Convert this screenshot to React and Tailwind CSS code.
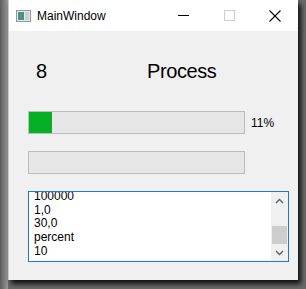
export default function App() {
  const font = { fontFamily: '"Liberation Sans", Arial, sans-serif' };
  return (
    <div className="w-[306px] h-[289px] bg-[#6a6a6a] overflow-hidden relative" style={font}>
      <div className="absolute left-0 top-0 w-[8px] h-full bg-gradient-to-r from-[#5c5c5c] to-[#9a9a9a]" />
      <div className="absolute ml-[8px] w-[290px] h-[280px] flex flex-col shadow-[3px_4px_5px_rgba(0,0,0,0.85)] border-l border-[#c8c8c8]">
        {/* title bar */}
        <div className="h-[31px] bg-white flex items-center">
          <div className="pl-[7px] flex items-center">
            <svg width="15" height="12" viewBox="0 0 15 12">
              <rect x="0.5" y="0.5" width="14" height="11" fill="#e4eaec" stroke="#8a9aa0" />
              <rect x="2" y="2" width="6" height="8" fill="#4f8f8a" />
              <rect x="9" y="2" width="4" height="8" fill="#c6d3d6" />
            </svg>
            <span className="ml-[6px] text-[12px] text-black leading-[14px]">MainWindow</span>
          </div>
          <div className="ml-auto flex h-full">
            <div className="w-[46px] h-full flex items-center justify-center">
              <svg width="11" height="11" viewBox="0 0 11 11">
                <line x1="0" y1="5.5" x2="11" y2="5.5" stroke="#000" strokeWidth="1" />
              </svg>
            </div>
            <div className="w-[46px] h-full flex items-center justify-center">
              <svg width="11" height="11" viewBox="0 0 11 11">
                <rect x="0.5" y="0.5" width="10" height="10" fill="none" stroke="#cccccc" strokeWidth="1" />
              </svg>
            </div>
            <div className="w-[46px] h-full flex items-center justify-center">
              <svg width="12" height="12" viewBox="0 0 12 12">
                <path d="M0.5 0.5 L11.5 11.5 M11.5 0.5 L0.5 11.5" stroke="#000" strokeWidth="1.1" fill="none" />
              </svg>
            </div>
          </div>
        </div>
        {/* client */}
        <div className="flex-1 bg-[#f0f0f0] flex flex-col pl-[19px]">
          <div className="mt-[28px] h-[24px] flex items-center pl-[8px] text-[20px] leading-[24px] text-black">
            <span className="w-[111px]">8</span>
            <span className="tracking-[-0.4px]">Process</span>
          </div>
          <div className="mt-[28px] flex items-center">
            <div className="w-[217px] h-[23px] border border-[#bcbcbc] bg-[#e6e6e6] p-0">
              <div className="h-full w-[23px] bg-[#06b025]" />
            </div>
            <span className="ml-[6px] text-[12px] leading-[14px] text-black">11%</span>
          </div>
          <div className="mt-[17px] w-[217px] h-[23px] border border-[#bcbcbc] bg-[#e6e6e6]" />
          <div className="mt-[17px] w-[261px] h-[71px] border border-[#1f78c8] bg-white flex overflow-hidden">
            <div className="flex-1 pl-[5px] overflow-hidden">
              <div className="mt-[-2px] text-[12px] leading-[13.67px] text-black">
                <div>100000</div>
                <div>1,0</div>
                <div>30,0</div>
                <div>percent</div>
                <div>10</div>
              </div>
            </div>
            <div className="w-[17px] h-full bg-[#f0f0f0] flex flex-col">
              <div className="h-[17px] flex items-center justify-center">
                <svg width="9" height="6" viewBox="0 0 9 6">
                  <path d="M1 5 L4.5 1.5 L8 5" stroke="#606060" strokeWidth="1.4" fill="none" />
                </svg>
              </div>
              <div className="flex-1 flex flex-col justify-end">
                <div className="h-[18px] bg-[#cdcdcd] mx-[1px]" />
              </div>
              <div className="h-[17px] flex items-center justify-center">
                <svg width="9" height="6" viewBox="0 0 9 6">
                  <path d="M1 1 L4.5 4.5 L8 1" stroke="#606060" strokeWidth="1.4" fill="none" />
                </svg>
              </div>
            </div>
          </div>
        </div>
      </div>
    </div>
  );
}
